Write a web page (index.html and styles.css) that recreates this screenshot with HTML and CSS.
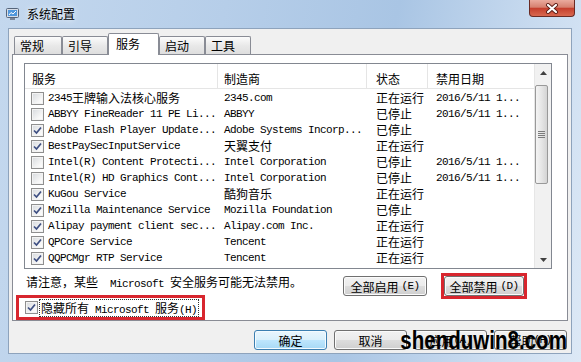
FILE: index.html
```html
<!DOCTYPE html>
<html lang="zh-CN">
<head>
<meta charset="UTF-8">
<title>系统配置</title>
<link rel="stylesheet" href="styles.css">
</head>
<body>
<div class="window">
  <div class="titlebar">
    <svg class="app-icon" viewBox="0 0 13 12">
      <rect x="0.5" y="0.5" width="12" height="9" rx="1" fill="#d7dde6" stroke="#55657a"/>
      <rect x="2" y="2" width="9" height="6" fill="#4f97dc"/>
      <path d="M3 7 L5 4.5 L7 6 L10 3" stroke="#ffffff" stroke-width="1" fill="none"/>
      <rect x="4" y="10" width="5" height="2" fill="#7a8698"/>
    </svg>
    <span class="title">系统配置</span>
    <div class="close">
      <svg width="14" height="11" viewBox="0 0 14 11">
        <path d="M3 2 L11 9 M11 2 L3 9" stroke="#5c1d15" stroke-width="4" stroke-linecap="round"/>
        <path d="M3 2 L11 9 M11 2 L3 9" stroke="#ffffff" stroke-width="2.2" stroke-linecap="round"/>
      </svg>
    </div>
  </div>

  <div class="client">
    <div class="tabs">
      <div class="tab">常规</div>
      <div class="tab">引导</div>
      <div class="tab active">服务</div>
      <div class="tab">启动</div>
      <div class="tab">工具</div>
    </div>

    <div class="panel">
      <div class="listview">
        <div class="list-main">
          <div class="lv-head">
            <div class="h1">服务</div>
            <div class="h2">制造商</div>
            <div class="h3">状态</div>
            <div class="h4">禁用日期</div>
          </div>
          <div class="lv-body">
            <div class="row">
              <div class="c1"><span class="cb"></span><span>2345<span class="zh">王牌输入法核心服务</span></span></div>
              <div class="c2">2345.com</div>
              <div class="c3 zh">正在运行</div>
              <div class="c4">2016/5/11 1...</div>
            </div>
            <div class="row">
              <div class="c1"><span class="cb"></span><span>ABBYY FineReader 11 PE Li...</span></div>
              <div class="c2">ABBYY</div>
              <div class="c3 zh">已停止</div>
              <div class="c4">2016/5/11 1...</div>
            </div>
            <div class="row">
              <div class="c1"><span class="cb"><svg viewBox="0 0 11 11"><path d="M2 5.5 L4.5 8 L9 2.5"/></svg></span><span>Adobe Flash Player Update...</span></div>
              <div class="c2">Adobe Systems Incorp...</div>
              <div class="c3 zh">已停止</div>
              <div class="c4"></div>
            </div>
            <div class="row">
              <div class="c1"><span class="cb"><svg viewBox="0 0 11 11"><path d="M2 5.5 L4.5 8 L9 2.5"/></svg></span><span>BestPaySecInputService</span></div>
              <div class="c2"><span class="zh">天翼支付</span></div>
              <div class="c3 zh">正在运行</div>
              <div class="c4"></div>
            </div>
            <div class="row">
              <div class="c1"><span class="cb"></span><span>Intel(R) Content Protecti...</span></div>
              <div class="c2">Intel Corporation</div>
              <div class="c3 zh">已停止</div>
              <div class="c4">2016/5/11 1...</div>
            </div>
            <div class="row">
              <div class="c1"><span class="cb"></span><span>Intel(R) HD Graphics Cont...</span></div>
              <div class="c2">Intel Corporation</div>
              <div class="c3 zh">已停止</div>
              <div class="c4">2016/5/11 1...</div>
            </div>
            <div class="row">
              <div class="c1"><span class="cb"><svg viewBox="0 0 11 11"><path d="M2 5.5 L4.5 8 L9 2.5"/></svg></span><span>KuGou Service</span></div>
              <div class="c2"><span class="zh">酷狗音乐</span></div>
              <div class="c3 zh">正在运行</div>
              <div class="c4"></div>
            </div>
            <div class="row">
              <div class="c1"><span class="cb"><svg viewBox="0 0 11 11"><path d="M2 5.5 L4.5 8 L9 2.5"/></svg></span><span>Mozilla Maintenance Service</span></div>
              <div class="c2">Mozilla Foundation</div>
              <div class="c3 zh">已停止</div>
              <div class="c4"></div>
            </div>
            <div class="row">
              <div class="c1"><span class="cb"><svg viewBox="0 0 11 11"><path d="M2 5.5 L4.5 8 L9 2.5"/></svg></span><span>Alipay payment client sec...</span></div>
              <div class="c2">Alipay.com Inc.</div>
              <div class="c3 zh">正在运行</div>
              <div class="c4"></div>
            </div>
            <div class="row">
              <div class="c1"><span class="cb"><svg viewBox="0 0 11 11"><path d="M2 5.5 L4.5 8 L9 2.5"/></svg></span><span>QPCore Service</span></div>
              <div class="c2">Tencent</div>
              <div class="c3 zh">正在运行</div>
              <div class="c4"></div>
            </div>
            <div class="row">
              <div class="c1"><span class="cb"><svg viewBox="0 0 11 11"><path d="M2 5.5 L4.5 8 L9 2.5"/></svg></span><span>QQPCMgr RTP Service</span></div>
              <div class="c2">Tencent</div>
              <div class="c3 zh">正在运行</div>
              <div class="c4"></div>
            </div>
            <div class="row">
              <div class="c1"><span class="cb"></span><span></span></div>
            </div>
          </div>
        </div>
        <div class="vscroll">
          <div class="sb-btn"><svg width="7" height="4" viewBox="0 0 7 4"><path d="M0 4 L3.5 0 L7 4 Z" fill="#404040"/></svg></div>
          <div class="sb-track">
            <div class="thumb">
              <svg width="7" height="7" viewBox="0 0 7 7">
                <path d="M0 0.5 H7 M0 2.5 H7 M0 4.5 H7 M0 6.5 H7" stroke="#7b7b7b" stroke-width="1"/>
              </svg>
            </div>
          </div>
          <div class="sb-btn"><svg width="7" height="4" viewBox="0 0 7 4"><path d="M0 0 L3.5 4 L7 0 Z" fill="#404040"/></svg></div>
        </div>
      </div>

      <div class="actions">
        <div class="note">请注意，某些<span class="lat">  Microsoft </span>安全服务可能无法禁用。</div>
        <button class="btn btn-enable">全部启用<span class="lat key">(E)</span></button>
        <div class="mark mark-btn"><button class="btn btn-disable">全部禁用<span class="lat key">(D)</span></button></div>
      </div>

      <div class="mark hide-ms">
        <span class="cb"><svg viewBox="0 0 11 11"><path d="M2 5.5 L4.5 8 L9 2.5"/></svg></span>
        <span class="focus">隐藏所有<span class="lat"> Microsoft </span>服务<span class="lat">(H)</span></span>
      </div>
    </div>

    <div class="footer">
      <button class="btn btn-foot default">确定</button>
      <button class="btn btn-foot">取消</button>
      <button class="btn btn-foot">应用<span class="lat">(A)</span></button>
      <button class="btn btn-foot">帮助<span class="lat">(H)</span></button>
    </div>

    <div class="watermark">shenduwin8.com</div>
  </div>
</div>
</body>
</html>
```

FILE: styles.css
```css
body { margin: 0; font: 12px "Noto Sans CJK SC", sans-serif; color: #000; }

.window { width: 581px; height: 362px; display: flex; flex-direction: column; overflow: hidden;
          background: linear-gradient(100deg, #c4d8ee 0%, #b6cee9 35%, #a9c5e4 62%, #cadcf0 85%, #dde9f6 100%); }

.titlebar { height: 28px; flex-shrink: 0; display: flex; align-items: center; padding-left: 6px; }
.app-icon { width: 13px; height: 12px; margin-right: 8px; }
.title { line-height: 14px; text-shadow: 0 0 6px #ffffff; }
.close { align-self: flex-start; margin-left: auto; margin-right: 6px; width: 46px; height: 17px; box-sizing: border-box;
         border: 1px solid #6a2a23; border-top: none; border-radius: 0 0 4px 4px;
         background: linear-gradient(#eaab9e, #d6806f 45%, #c53f2d 52%, #d8684f);
         display: flex; align-items: center; justify-content: center; }

.client { flex: 1; margin: 0 9px 8px 8px; border: 1px solid #8ea3bc; background: #f0f0f0;
          padding: 4px 3px 0; display: flex; flex-direction: column; position: relative; }

.tabs { height: 21px; display: flex; align-items: flex-end; padding-left: 2px; }
.tab { width: 46px; height: 18px; box-sizing: border-box; border: 1px solid #898c95; border-bottom: none;
       border-radius: 2px 2px 0 0; padding-left: 5px; line-height: 17px;
       background: linear-gradient(#fcfcfc, #e9e9e9 50%, #dedede); }
.tab:first-child { width: 48px; }
.tab.active { width: 51px; height: 22px; margin-bottom: -1px; padding-left: 7px; line-height: 19px;
              background: #ffffff; position: relative; z-index: 1; }

.panel { height: 267px; box-sizing: border-box; border: 1px solid #898c95; background: #ffffff;
         display: flex; flex-direction: column; }

.listview { margin: 8px 0 0 11px; width: 528px; height: 206px; box-sizing: border-box;
            border: 1px solid #828790; display: flex; background: #ffffff; }
.list-main { flex: 1; overflow: hidden; }

.lv-head { display: flex; height: 24px; border-bottom: 1px solid #e5e5e5; }
.lv-head div { box-sizing: border-box; border-right: 1px solid #e5e5e5; padding-top: 5px;
               display: flex; align-items: center; }
.h1 { width: 193px; padding-left: 7px; }
.h2 { width: 149px; padding-left: 6px; }
.h3 { width: 61px; padding-left: 9px; }
.h4 { flex: 1; padding-left: 8px; border-right: none !important; }

.lv-body { font: 11px "Liberation Mono", monospace; letter-spacing: -0.6px; padding-top: 1px; }
.row { display: flex; height: 16px; line-height: 16px; white-space: nowrap; }
.row div { box-sizing: border-box; overflow: hidden; }
.c1 { width: 193px; padding-left: 6px; display: flex; align-items: center; gap: 4px; }
.c2 { width: 149px; padding-left: 6px; }
.c3 { width: 61px; padding-left: 9px; }
.c4 { flex: 1; padding-left: 8px; }

.zh { font: 12px "Noto Sans CJK SC", sans-serif; letter-spacing: 0; vertical-align: top; line-height: 16px; }
.lat { font: 11px "Liberation Mono", monospace; letter-spacing: -0.6px; white-space: pre; }

.cb { width: 13px; height: 13px; flex-shrink: 0; box-sizing: border-box; border: 1px solid #8f8f8f;
      background: linear-gradient(135deg, #d6d9dd, #f7f7f7 70%, #ffffff);
      box-shadow: inset 0 0 0 1px #f3f3f3; display: flex; align-items: center; justify-content: center; }
.cb svg { width: 11px; height: 11px; }
.cb path { fill: none; stroke: #3e4f82; stroke-width: 1.7; }

.vscroll { width: 17px; display: flex; flex-direction: column; background: #f1f1f1;
           border-left: 1px solid #e6e6e6; box-sizing: border-box; }
.sb-btn { height: 17px; display: flex; align-items: center; justify-content: center; }
.sb-track { flex: 1; padding-top: 4px; }
.thumb { width: 13px; height: 99px; box-sizing: border-box; border: 1px solid #999999; border-radius: 2px;
         background: linear-gradient(to right, #f4f4f4, #e6e6e6 50%, #d4d4d4);
         display: flex; align-items: center; justify-content: center; }

.actions { height: 22px; display: flex; align-items: flex-start; margin-top: 4px; padding-left: 13px; }
.note { margin-top: 2px; line-height: 14px; white-space: nowrap; }

.btn { height: 20px; box-sizing: border-box; padding: 0; border: 1px solid #707070; border-radius: 3px;
       background: linear-gradient(#f2f2f2, #ebebeb 50%, #dddddd 51%, #cfcfcf);
       box-shadow: inset 0 0 0 1px #fbfbfb; font: 12px "Noto Sans CJK SC", sans-serif; color: #000;
       display: flex; align-items: center; justify-content: center; }
.key { margin-left: 3px; }
.btn-enable { width: 84px; margin: 3px 0 0 auto; }
.mark { border: 3px solid #d8262e; }
.mark-btn { margin: 0 40px 0 14px; height: 26px; box-sizing: border-box; }
.btn-disable { width: 80px; }

.hide-ms { align-self: flex-start; margin-left: 3px; height: 25px; box-sizing: border-box;
           display: flex; align-items: center; padding: 0 3px 0 6px; gap: 1px; }
.focus { border: 1px dotted #333333; padding: 0 1px; line-height: 15px; white-space: nowrap; }

.footer { display: flex; justify-content: flex-end; gap: 7px; margin-top: 9px; padding-right: 1px; }
.btn-foot { width: 73px; }
.btn.default { border-color: #3c7fb1; background: linear-gradient(#eaf6fd, #d9f0fc 50%, #bee6fd 51%, #a7d9f5);
               box-shadow: inset 0 0 0 1px #f4fbff; }

.watermark { position: absolute; right: 4px; bottom: 0; font: bold 26px "Liberation Sans", sans-serif;
             line-height: 26px; color: #000; transform: scaleX(0.79); transform-origin: right bottom; }
```
